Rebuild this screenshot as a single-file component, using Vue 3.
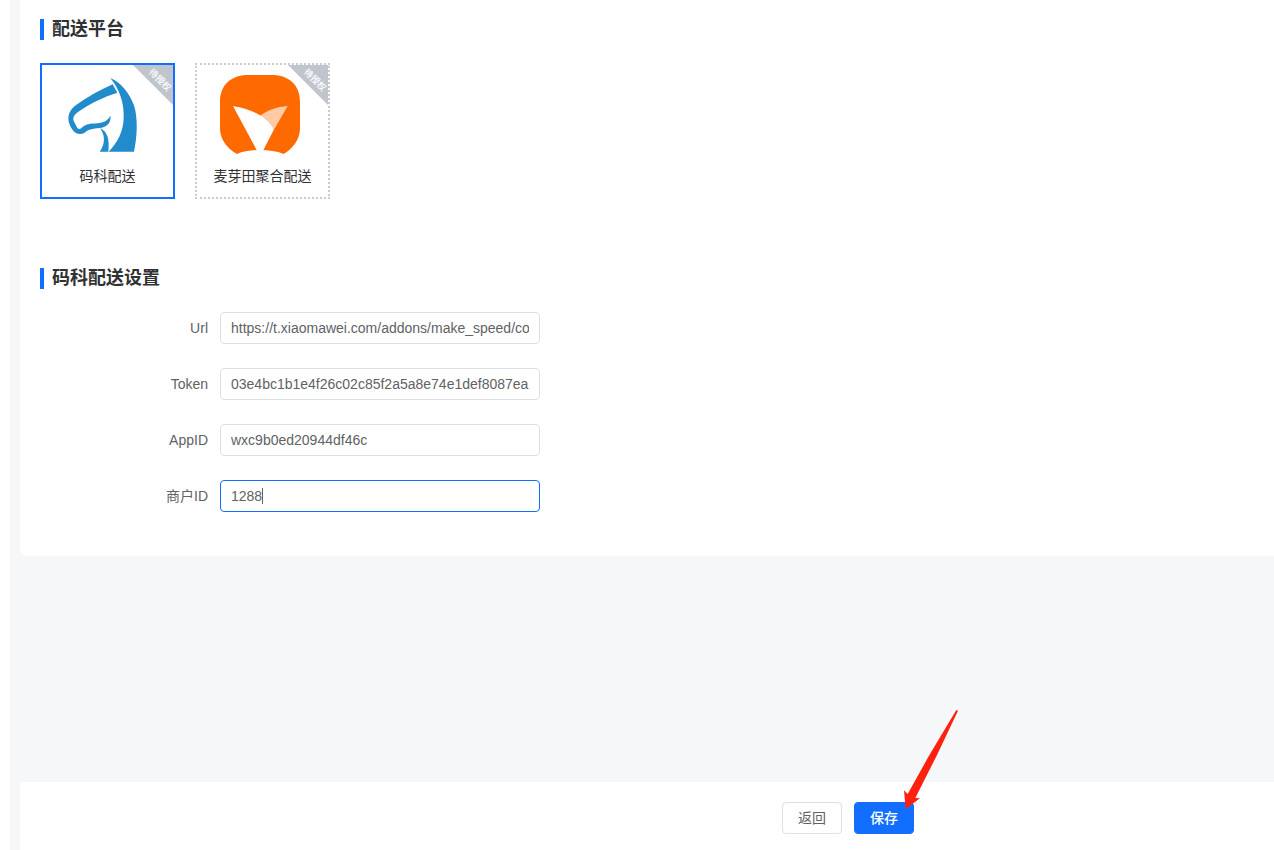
<script setup>
import { ref, onMounted } from 'vue'

const selected = ref('make')
const fields = ref([
  { id: 'url', label: 'Url', value: 'https://t.xiaomawei.com/addons/make_speed/co' },
  { id: 'token', label: 'Token', value: '03e4bc1b1e4f26c02c85f2a5a8e74e1def8087ea' },
  { id: 'appid', label: 'AppID', value: 'wxc9b0ed20944df46c' },
  { id: 'merchant', label: '商户ID', value: '1288' }
])

onMounted(() => {
  const el = document.getElementById('merchant')
  el.focus()
  el.setSelectionRange(el.value.length, el.value.length)
})
</script>

<template>
  <div class="page">
    <main class="panel">
      <section>
        <h2 class="title">配送平台</h2>
        <div class="platforms">
          <button type="button" class="platform" :class="{ active: selected === 'make' }" @click="selected = 'make'">
            <svg class="logo" viewBox="15 15 240 240" aria-hidden="true">
              <g fill="#228bcb">
                <path d="M151 24C184 38 209 70 222 106C234 145 232 200 222 245L146 245C172 219 190 185 191 145C193 98 178 57 151 24Z" />
                <path d="M158 43L172 68C132 80 90 101 54 126C40 136 37 146 43 157L52 174Q57 180 64 175C76 162 91 161 112 160C132 159 146 150 151 136C154 157 143 170 125 173C108 176 87 174 73 189C60 196 47 191 41 184C31 172 25 159 25 145C26 126 36 114 48 105C84 80 120 60 158 43Z" />
                <path d="M120 174C143 186 149 207 145 245L119 245C136 222 136 197 120 174Z" />
              </g>
            </svg>
            <span>码科配送</span>
            <span class="ribbon"><span class="ribbon-text">待授权</span></span>
          </button>
          <button type="button" class="platform" :class="{ active: selected === 'myt' }" @click="selected = 'myt'">
            <svg class="logo" viewBox="120 75 240 240" aria-hidden="true">
              <path fill="#ff6a00" d="M120 155C120 106 152 75 205 75H275C328 75 360 106 360 155V235C360 268 339 296 311 312C290 303 265 300 240 300C215 300 190 303 171 312C141 296 120 268 120 235Z" />
              <path fill="#ffcaa6" d="M323 168L281 241L238 199C262 181 290 170 323 168Z" />
              <path fill="#fff" d="M159 168C212 176 265 201 281 240L249 302H231Z" />
            </svg>
            <span>麦芽田聚合配送</span>
            <span class="ribbon"><span class="ribbon-text">待授权</span></span>
          </button>
        </div>
      </section>

      <section>
        <h2 class="title">码科配送设置</h2>
        <form class="form" @submit.prevent>
          <div v-for="f in fields" :key="f.id" class="row">
            <label :for="f.id">{{ f.label }}</label>
            <div class="field">
              <input :id="f.id" v-model="f.value" type="text" autocomplete="off" spellcheck="false" />
              <span v-if="f.id === 'merchant'" class="caret" aria-hidden="true"></span>
            </div>
          </div>
        </form>
      </section>
    </main>

    <footer class="footer">
      <button type="button" class="btn">返回</button>
      <div class="save">
        <button type="button" class="btn primary">保存</button>
        <svg class="arrow" viewBox="432 59 162 297" aria-hidden="true">
          <path fill="#ff2010" d="M594 61L589 59L506 198L443 311L432 300L437 356L480 324L466 323L530 196L594 61Z" />
        </svg>
      </div>
    </footer>
  </div>
</template>

<style>
body {
  margin: 0;
  background: #f5f7f9;
}
</style>

<style scoped>
.page {
  box-sizing: border-box;
  min-height: 100vh;
  display: flex;
  flex-direction: column;
  padding-left: 10px;
  border-left: 10px solid #fff;
  background: #f5f7f9;
  font-family: "Liberation Sans", "Noto Sans CJK SC", sans-serif;
  font-size: 14px;
  color: #303133;
}
.panel {
  display: flex;
  flex-direction: column;
  gap: 69px;
  padding: 19px 20px 44px;
  background: #fff;
  border-radius: 2px 0 0 8px;
}
.title {
  margin: 0 0 23px;
  padding-left: 8px;
  border-left: 4px solid #126eff;
  font-size: 18px;
  line-height: 21px;
  font-weight: 600;
}
.platforms {
  display: flex;
  gap: 20px;
}
.platform {
  position: relative;
  box-sizing: border-box;
  width: 135px;
  height: 136px;
  display: flex;
  flex-direction: column;
  align-items: center;
  gap: 10px;
  padding: 10px 0 0;
  border: 2px dotted #ccc;
  background: #fff;
  font: inherit;
  line-height: 22px;
  color: #303133;
  cursor: pointer;
}
.platform.active {
  border: 2px solid #126eff;
}
.logo {
  width: 80px;
  height: 80px;
  margin-right: 5px;
}
.ribbon {
  position: absolute;
  top: 0;
  right: 0;
  width: 40px;
  height: 40px;
  background: #c0c4cc;
  clip-path: polygon(0 0, 100% 0, 100% 100%);
}
.ribbon-text {
  position: absolute;
  top: 9px;
  left: 7px;
  width: 40px;
  font-size: 9px;
  line-height: 12px;
  font-weight: 500;
  text-align: center;
  color: #fff;
  transform: rotate(45deg);
}
.form {
  display: flex;
  flex-direction: column;
  gap: 24px;
}
.row {
  display: flex;
  align-items: center;
  gap: 12px;
}
.row label {
  width: 168px;
  text-align: right;
  line-height: 32px;
  color: #606266;
}
.field {
  position: relative;
  display: flex;
}
.field input {
  box-sizing: border-box;
  width: 320px;
  height: 32px;
  padding: 0 10px;
  border: 1px solid #dcdfe6;
  border-radius: 4px;
  outline: none;
  background: #fff;
  font: inherit;
  color: #606266;
  caret-color: transparent;
}
.field input:focus {
  border-color: #126eff;
}
.caret {
  position: absolute;
  left: 42px;
  top: 8px;
  width: 1px;
  height: 16px;
  background: #606266;
}
.footer {
  display: flex;
  justify-content: center;
  gap: 12px;
  margin-top: auto;
  padding: 20px 0 16px 402px;
  background: #fff;
}
.btn {
  box-sizing: border-box;
  width: 60px;
  height: 32px;
  padding: 0 0 2px;
  border: 1px solid #dcdfe6;
  border-radius: 4px;
  background: #fff;
  font: inherit;
  color: #606266;
  cursor: pointer;
}
.btn.primary {
  border-color: #126eff;
  background: #126eff;
  color: #fff;
  font-weight: 500;
}
.save {
  position: relative;
}
.arrow {
  position: absolute;
  left: 50px;
  bottom: 25px;
  width: 54px;
  height: 99px;
  pointer-events: none;
}
</style>
